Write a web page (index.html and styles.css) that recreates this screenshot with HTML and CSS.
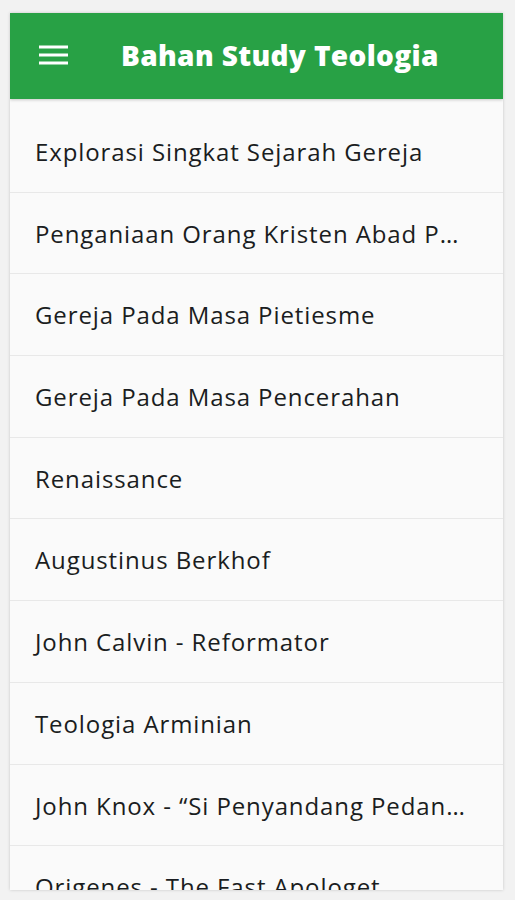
FILE: index.html
```html
<!DOCTYPE html>
<html>
<head>
<meta charset="utf-8">
<link rel="stylesheet" href="styles.css">
</head>
<body>
<div class="screen">
  <div class="card">
    <header class="appbar">
      <svg class="menu" width="29" height="20" viewBox="0 0 29 20"><rect x="0" y="0.5" width="29" height="3" fill="#fff"/><rect x="0" y="8.5" width="29" height="3" fill="#fff"/><rect x="0" y="16.5" width="29" height="3" fill="#fff"/></svg>
      <h1 class="title">Bahan Study Teologia</h1>
    </header>
    <ul class="list">
      <li class="item">Explorasi Singkat Sejarah Gereja</li>
      <li class="item">Penganiaan Orang Kristen Abad Pertama</li>
      <li class="item">Gereja Pada Masa Pietiesme</li>
      <li class="item">Gereja Pada Masa Pencerahan</li>
      <li class="item">Renaissance</li>
      <li class="item">Augustinus Berkhof</li>
      <li class="item">John Calvin - Reformator</li>
      <li class="item">Teologia Arminian</li>
      <li class="item">John Knox - “Si Penyandang Pedang Roh”</li>
      <li class="item">Origenes - The Fast Apologet</li>
    </ul>
  </div>
</div>
</body>
</html>
```
FILE: styles.css
```css
html, body {
  margin: 0;
  padding: 0;
  background: #f2f2f2;
}
.screen {
  padding: 13px 12px 10px 10px;
  height: 900px;
  box-sizing: border-box;
}
.card {
  height: 877px;
  background: #fafafa;
  box-shadow: 0 0 3px rgba(0,0,0,0.18);
  overflow: hidden;
  display: flex;
  flex-direction: column;
}
.appbar {
  height: 86px;
  flex: none;
  background: #28a145;
  display: flex;
  align-items: center;
  padding-left: 29px;
  box-shadow: 0 1px 3px rgba(0,0,0,0.2);
  position: relative;
  z-index: 1;
}
.menu {
  display: block;
  margin-top: -2px;
}
.title {
  margin: -2px 0 0 53px;
  color: #fff;
  font-family: "Open Sans", sans-serif;
  font-weight: 800;
  font-size: 28px;
  letter-spacing: 0.35px;
}
.list {
  list-style: none;
  margin: 0;
  padding: 12px 0 0 0;
}
.item {
  display: block;
  height: 81.7px;
  line-height: 81px;
  box-sizing: border-box;
  border-bottom: 1px solid #e8e8e8;
  padding: 0 35px 0 25px;
  font-family: "Open Sans", sans-serif;
  font-size: 24px;
  letter-spacing: 0.9px;
  color: #1a1d21;
  white-space: nowrap;
  overflow: hidden;
  text-overflow: ellipsis;
}
```
